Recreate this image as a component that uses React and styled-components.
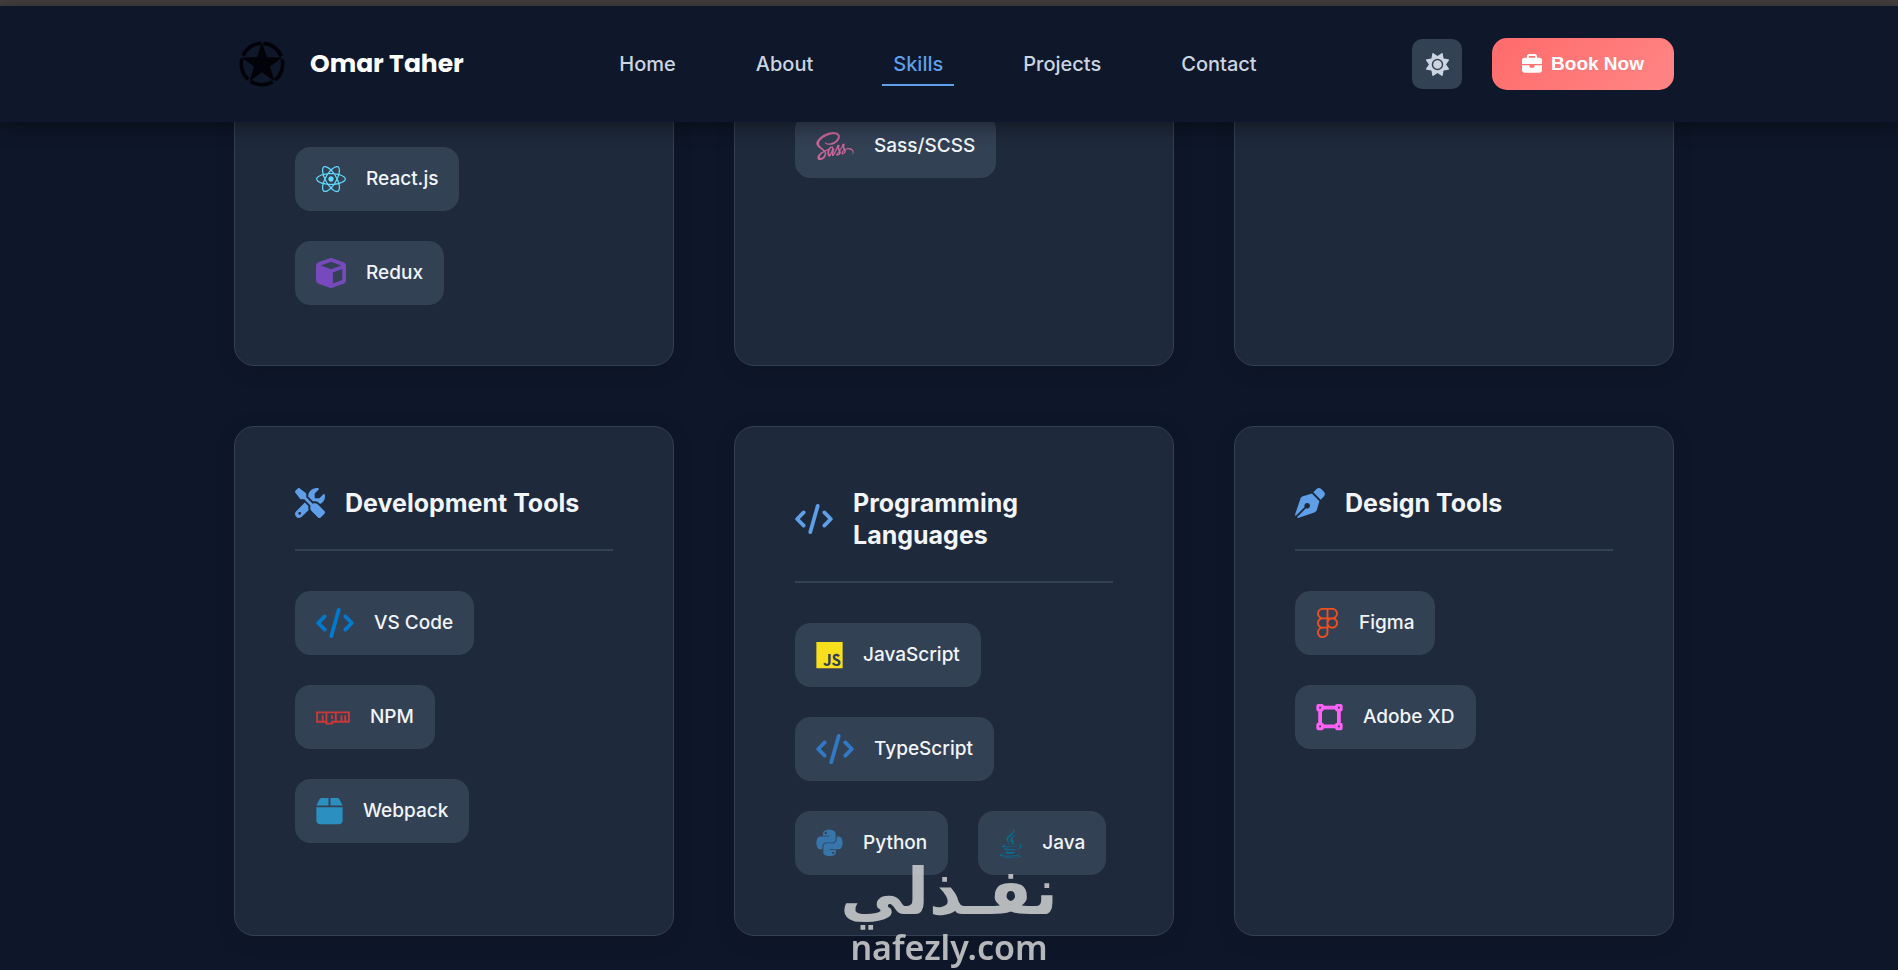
import styled, { createGlobalStyle } from "styled-components";
import {
  FaBox,
  FaBriefcase,
  FaCode,
  FaCube,
  FaFigma,
  FaJava,
  FaJs,
  FaNpm,
  FaPenNib,
  FaPython,
  FaReact,
  FaSass,
  FaScrewdriverWrench,
  FaSun,
  FaVectorSquare,
} from "react-icons/fa6";

const GlobalStyle = createGlobalStyle`
  :root {
    --bg: #0e1729;
    --header: #0f172a;
    --card: #1e293b;
    --chip: #334155;
    --text: #f1f5f9;
    --muted: #cbd5e1;
    --accent: #5e9fe8;
    --maxWidth: 1440px;
  }
  * {
    box-sizing: border-box;
  }
  body {
    margin: 0;
    background: var(--bg);
    color: var(--text);
    font-family: Inter, "Liberation Sans", sans-serif;
  }
`;

const Page = styled.div`
  min-height: 100vh;
  border-top: 6px solid #443f40;
`;

const HeaderStyles = styled.header`
  position: sticky;
  top: 0;
  z-index: 10;
  padding: 32px 0 32px 10px;
  background: var(--header);
  box-shadow: 0 4px 20px rgba(0, 0, 0, 0.45);
`;

const HeaderInner = styled.div`
  display: flex;
  align-items: center;
  justify-content: space-between;
  max-width: var(--maxWidth);
  margin: 0 auto;
`;

const Brand = styled.a`
  display: flex;
  align-items: center;
  gap: 20px;
  color: #fff;
  font-family: Poppins, Inter, sans-serif;
  font-size: 25px;
  font-weight: 700;
  line-height: 32px;
  text-decoration: none;
  svg {
    display: block;
    width: 56px;
    height: 46px;
  }
`;

const Nav = styled.nav`
  display: flex;
  gap: 58px;
`;

const NavLink = styled.a`
  padding: 10px 11px 8px;
  border-bottom: 2px solid
    ${({ $active }) => ($active ? "var(--accent)" : "transparent")};
  color: ${({ $active }) => ($active ? "var(--accent)" : "var(--muted)")};
  font-size: 20px;
  font-weight: 500;
  line-height: 24px;
  text-decoration: none;
`;

const Actions = styled.div`
  display: flex;
  align-items: center;
  gap: 30px;
`;

const ThemeButton = styled.button`
  display: grid;
  place-items: center;
  width: 50px;
  height: 50px;
  border: 0;
  border-radius: 10px;
  background: var(--chip);
  color: var(--muted);
  font-size: 23px;
`;

const BookButton = styled.button`
  display: flex;
  align-items: center;
  gap: 9px;
  height: 52px;
  padding: 0 30px;
  border: 0;
  border-radius: 15px;
  background: linear-gradient(135deg, #ff6b6b, #ff8585);
  color: #fff;
  font-family: "Liberation Sans", Arial, sans-serif;
  font-size: 19px;
  font-weight: 700;
  svg {
    width: 20px;
    height: 20px;
  }
`;

const Skills = styled.main`
  padding: 0 0 30px 10px;
`;

/* the grid starts underneath the sticky header */
const SkillsGrid = styled.div`
  display: grid;
  grid-template-columns: repeat(3, 1fr);
  gap: 60px;
  max-width: var(--maxWidth);
  margin: -36px auto 0;
`;

const Card = styled.section`
  padding: ${({ $tucked }) => ($tucked ? "27px" : "60px")} 60px 60px;
  border: 1px solid var(--chip);
  border-radius: 20px;
  background: var(--card);
  box-shadow: 0 4px 20px rgba(0, 0, 0, 0.15);
`;

const CardHeader = styled.div`
  display: flex;
  align-items: center;
  gap: 20px;
  margin-bottom: 40px;
  padding-bottom: 30px;
  border-bottom: 2px solid var(--chip);
  h2 {
    margin: 0;
    font-size: 25px;
    font-weight: 700;
    line-height: 32px;
  }
  svg {
    flex-shrink: 0;
    width: ${({ $iconWidth }) => $iconWidth}px;
    height: 30px;
    color: var(--accent);
  }
`;

const ChipList = styled.ul`
  display: flex;
  flex-wrap: wrap;
  gap: 30px;
  margin: 0;
  padding: 0;
  list-style: none;
`;

const Chip = styled.li`
  display: flex;
  align-items: center;
  gap: 20px;
  height: 64px;
  padding: 0 20px;
  border: 1px solid var(--chip);
  border-radius: 15px;
  background: var(--chip);
  font-size: 19px;
  font-weight: 500;
  line-height: 24px;
  svg {
    flex-shrink: 0;
    width: ${({ $iconWidth }) => $iconWidth}px;
    height: 30px;
    color: ${({ $color }) => $color};
  }
`;

const Watermark = styled.div`
  position: fixed;
  bottom: 0;
  left: 50%;
  z-index: 20;
  transform: translateX(-50%);
  color: #c4c6c8;
  opacity: 0.92;
  text-align: center;
  white-space: nowrap;
  pointer-events: none;
  .arabic {
    font-family: "DejaVu Sans", sans-serif;
    font-size: 64px;
    font-weight: 700;
    line-height: 64px;
  }
  .latin {
    font-family: "Noto Sans", sans-serif;
    font-size: 34px;
    font-weight: 600;
    line-height: 46px;
  }
`;

const links = ["Home", "About", "Skills", "Projects", "Contact"];

const groups = [
  {
    id: "frontend",
    skills: [
      { name: "React.js", icon: FaReact, width: 30, color: "#61dafb" },
      { name: "Redux", icon: FaCube, width: 30, color: "#764abc" },
    ],
  },
  {
    id: "styling",
    tucked: true,
    skills: [{ name: "Sass/SCSS", icon: FaSass, width: 38, color: "#cc6699" }],
  },
  { id: "backend", skills: [] },
  {
    id: "tools",
    title: "Development Tools",
    icon: FaScrewdriverWrench,
    width: 30,
    skills: [
      { name: "VS Code", icon: FaCode, width: 38, color: "#007acc" },
      { name: "NPM", icon: FaNpm, width: 34, color: "#cb3837" },
      { name: "Webpack", icon: FaBox, width: 27, color: "#2b8fc0" },
    ],
  },
  {
    id: "languages",
    title: "Programming Languages",
    icon: FaCode,
    width: 38,
    skills: [
      { name: "JavaScript", icon: FaJs, width: 27, color: "#f7df1e" },
      { name: "TypeScript", icon: FaCode, width: 38, color: "#3178c6" },
      { name: "Python", icon: FaPython, width: 27, color: "#3776ab" },
      { name: "Java", icon: FaJava, width: 23, color: "#007396" },
    ],
  },
  {
    id: "design",
    title: "Design Tools",
    icon: FaPenNib,
    width: 30,
    skills: [
      { name: "Figma", icon: FaFigma, width: 23, color: "#f24e1e" },
      { name: "Adobe XD", icon: FaVectorSquare, width: 27, color: "#ff61f6" },
    ],
  },
];

function StarLogo() {
  return (
    <svg viewBox="-28 -23 56 46" aria-hidden="true">
      <circle
        r="20.7"
        fill="none"
        stroke="#020308"
        strokeWidth="3.6"
        strokeDasharray="22.8 3.21"
        strokeDashoffset="-1.6"
        transform="rotate(-90)"
      />
      <polygon
        fill="#020308"
        points="0,-21.5 4.9,-6.7 20.4,-6.6 7.9,2.6 12.6,17.4 0,8.3 -12.6,17.4 -7.9,2.6 -20.4,-6.6 -4.9,-6.7"
      />
    </svg>
  );
}

function Header() {
  return (
    <HeaderStyles>
      <HeaderInner>
        <Brand href="#home">
          <StarLogo />
          Omar Taher
        </Brand>
        <Nav>
          {links.map((link) => (
            <NavLink
              key={link}
              href={`#${link.toLowerCase()}`}
              $active={link === "Skills"}
            >
              {link}
            </NavLink>
          ))}
        </Nav>
        <Actions>
          <ThemeButton type="button" aria-label="Toggle theme">
            <FaSun />
          </ThemeButton>
          <BookButton type="button">
            <FaBriefcase />
            Book Now
          </BookButton>
        </Actions>
      </HeaderInner>
    </HeaderStyles>
  );
}

function SkillCard({ group }) {
  const { title, icon: Icon, width, skills, tucked } = group;
  return (
    <Card $tucked={tucked}>
      {title && (
        <CardHeader $iconWidth={width}>
          <Icon />
          <h2>{title}</h2>
        </CardHeader>
      )}
      <ChipList>
        {skills.map((skill) => (
          <Chip key={skill.name} $color={skill.color} $iconWidth={skill.width}>
            <skill.icon />
            {skill.name}
          </Chip>
        ))}
      </ChipList>
    </Card>
  );
}

export default function App() {
  return (
    <Page>
      <GlobalStyle />
      <Header />
      <Skills id="skills">
        <SkillsGrid>
          {groups.map((group) => (
            <SkillCard key={group.id} group={group} />
          ))}
        </SkillsGrid>
      </Skills>
      <Watermark>
        <div className="arabic" lang="ar" dir="rtl">
          نفـذلي
        </div>
        <div className="latin">nafezly.com</div>
      </Watermark>
    </Page>
  );
}
